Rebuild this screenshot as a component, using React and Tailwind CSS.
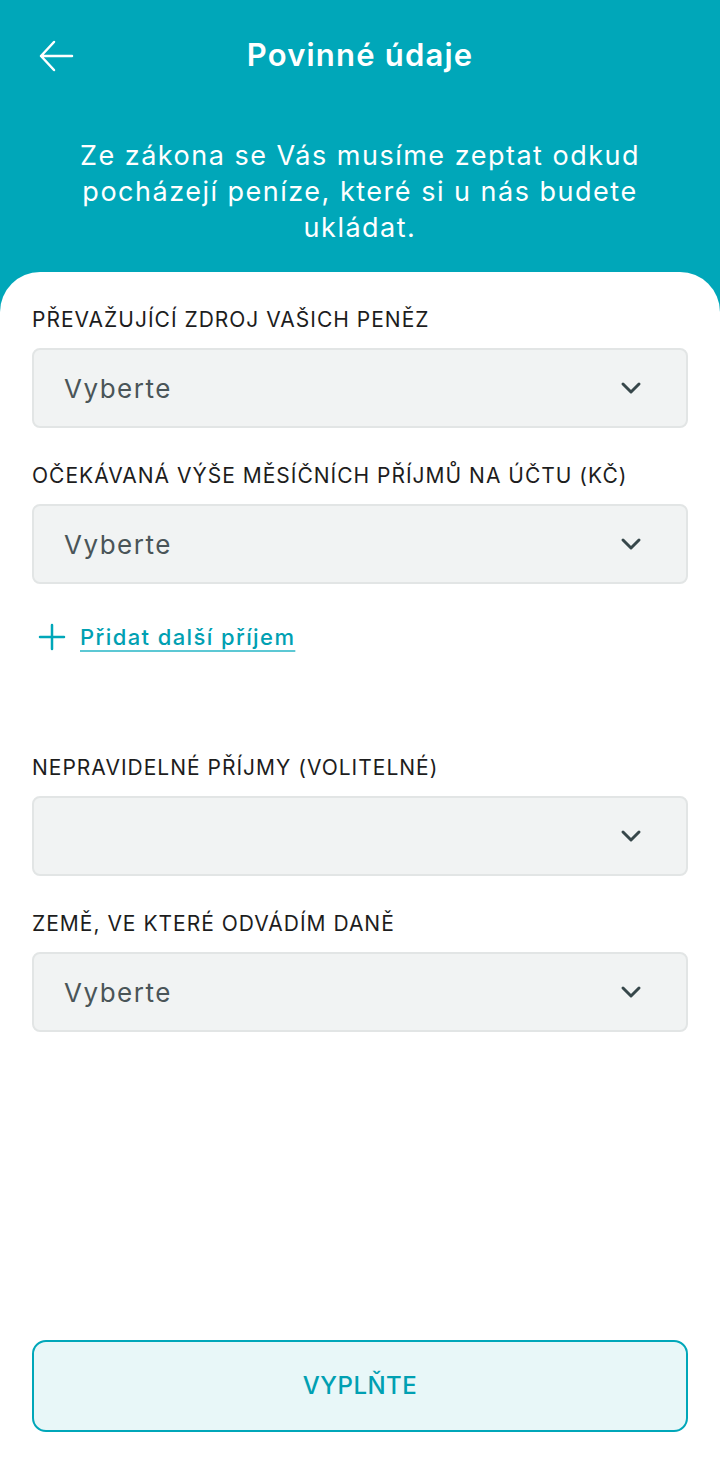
import React from "react";

const Chevron = () => (
  <svg width="22" height="14" viewBox="0 0 22 14" fill="none">
    <path d="M3 3l8 8 8-8" stroke="#37474a" strokeWidth="3" strokeLinecap="round" strokeLinejoin="round" />
  </svg>
);

const Select = ({ value }) => (
  <div className="flex h-[80px] items-center justify-between rounded-[8px] border-2 border-[#e2e5e5] bg-[#f1f3f3] pl-[30px] pr-[44px]">
    <span className="text-[26px] tracking-[1.5px] text-[#4a5558]">{value}</span>
    <Chevron />
  </div>
);

const Label = ({ children }) => (
  <div className="h-[28px] text-[21px] leading-[28px] text-[#1d1d1d] tracking-[1px]">{children}</div>
);

export default function App() {
  return (
    <div
      className="flex h-[1480px] w-[720px] flex-col bg-[#00a7b9]"
      style={{ fontFamily: '"Inter", "Noto Sans", sans-serif' }}
    >
      <div className="relative flex h-[110px] items-center justify-center">
        <div className="absolute left-[38px] top-[38px]">
          <svg width="36" height="36" viewBox="0 0 36 36" fill="none">
            <path d="M3 18h31M16 4L3 18l13 14" stroke="white" strokeWidth="2.5" strokeLinecap="round" strokeLinejoin="round" />
          </svg>
        </div>
        <h1 className="text-[31px] font-semibold tracking-[1.2px] text-white">Povinné údaje</h1>
      </div>
      <div className="px-[76px] pt-[28px] text-center text-[27px] leading-[36px] tracking-[1.5px] text-white">
        Ze zákona se Vás musíme zeptat odkud pocházejí peníze, které si u nás budete ukládat.
      </div>
      <div className="mt-[26px] flex flex-1 flex-col rounded-t-[40px] bg-white px-[32px] pt-[34px]">
        <Label>PŘEVAŽUJÍCÍ ZDROJ VAŠICH PENĚZ</Label>
        <div className="mt-[14px]"><Select value="Vyberte" /></div>
        <div className="mt-[34px]"><Label>OČEKÁVANÁ VÝŠE MĚSÍČNÍCH PŘÍJMŮ NA ÚČTU (KČ)</Label></div>
        <div className="mt-[14px]"><Select value="Vyberte" /></div>
        <div className="mt-[37px] flex h-[32px] items-center gap-[14px] pl-[6px]">
          <svg width="28" height="28" viewBox="0 0 28 28" fill="none">
            <path d="M14 2v24M2 14h24" stroke="#00a7b9" strokeWidth="2.5" strokeLinecap="round" />
          </svg>
          <span className="text-[22px] font-medium tracking-[1.4px] text-[#00a0b2] underline decoration-[#5cc8d4] decoration-2 underline-offset-[5px]">
            Přidat další příjem
          </span>
        </div>
        <div className="mt-[101px]"><Label>NEPRAVIDELNÉ PŘÍJMY (VOLITELNÉ)</Label></div>
        <div className="mt-[14px]"><Select value="" /></div>
        <div className="mt-[34px]"><Label>ZEMĚ, VE KTERÉ ODVÁDÍM DANĚ</Label></div>
        <div className="mt-[14px]"><Select value="Vyberte" /></div>
        <div className="flex-1" />
        <div className="mb-[48px] flex h-[92px] items-center justify-center rounded-[14px] border-2 border-[#00a7b9] bg-[#e8f7f8]">
          <span className="text-[24px] font-medium text-[#00a0b2] tracking-[0.5px]">VYPLŇTE</span>
        </div>
      </div>
    </div>
  );
}
